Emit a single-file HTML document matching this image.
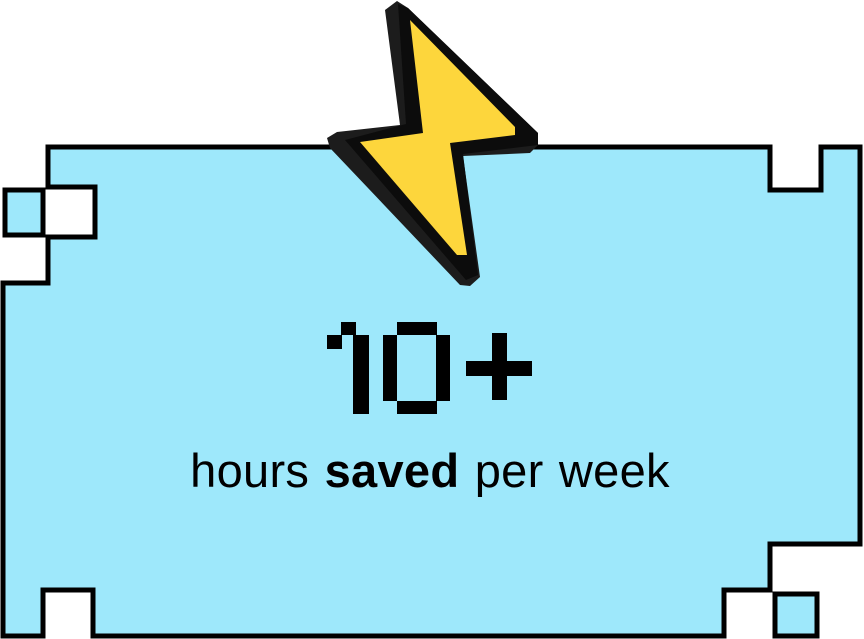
<!DOCTYPE html>
<html><head><meta charset="utf-8"><style>
html,body{margin:0;padding:0;background:#fff;width:864px;height:639px;overflow:hidden}
svg{position:absolute;left:0;top:0}
.t{position:absolute;left:0;width:860px;top:443px;text-align:center;font-family:"Liberation Sans",sans-serif;font-size:47px;color:#000;line-height:56px;letter-spacing:0.3px;word-spacing:2px}
</style></head><body>
<svg width="864" height="639" viewBox="0 0 864 639">
<path d="M48 147 H770 V190 H821 V147 H860 V544 H770 V590 H724 V636 H93 V590 H43 V636 H3 V283 H48 V237 H95 V187 H48 Z" fill="#9ee8fb" stroke="#000" stroke-width="5"/>
<rect x="5" y="190" width="38" height="45" fill="#9ee8fb" stroke="#000" stroke-width="5"/>
<rect x="775" y="594" width="42" height="42" fill="#9ee8fb" stroke="#000" stroke-width="5"/>
<polygon points="385,10 397,1 408,8 538,133 538,145 530,153 463,156 480,277 470,286 460,285 330,148 327,138 337,132 400,125" fill="#1c1c1c"/>
<polygon points="398,4 408,8 538,133 538,145 463,154 478,275 466,280 345,140 406,124" fill="#0c0c0c"/>
<polygon points="410,20 515,127 515,135 450,143 467,255 457,255 360,142 423,133" fill="#fdd63c"/>
<g fill="#000">
<rect x="327" y="335" width="15" height="14"/><rect x="341" y="322" width="15" height="13"/><rect x="353" y="335" width="16" height="79"/>
<rect x="397" y="322" width="40" height="13"/><rect x="383" y="335" width="14" height="66"/><rect x="436" y="335" width="14" height="66"/><rect x="397" y="401" width="40" height="13"/>
<rect x="466" y="361" width="66" height="15"/><rect x="492" y="333" width="15" height="67"/>
</g>
</svg>
<div class="t">hours <b>saved</b> per week</div>
</body></html>
